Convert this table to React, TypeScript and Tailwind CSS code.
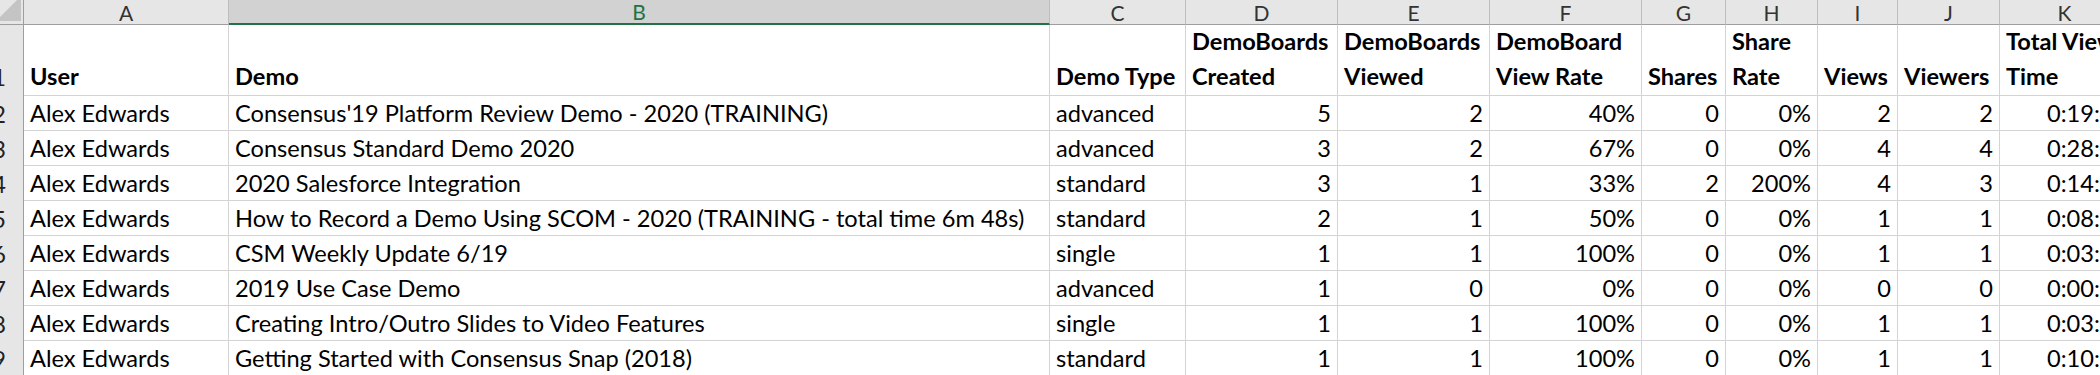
import React from "react";

type Row = {
  user: string;
  demo: string;
  type: string;
  created: number;
  viewed: number;
  viewRate: string;
  shares: number;
  shareRate: string;
  views: number;
  viewers: number;
  time: string;
};

const rows: Row[] = [
  { user: "Alex Edwards", demo: "Consensus'19 Platform Review Demo - 2020 (TRAINING)", type: "advanced", created: 5, viewed: 2, viewRate: "40%", shares: 0, shareRate: "0%", views: 2, viewers: 2, time: "0:19:42" },
  { user: "Alex Edwards", demo: "Consensus Standard Demo 2020", type: "advanced", created: 3, viewed: 2, viewRate: "67%", shares: 0, shareRate: "0%", views: 4, viewers: 4, time: "0:28:15" },
  { user: "Alex Edwards", demo: "2020 Salesforce Integration", type: "standard", created: 3, viewed: 1, viewRate: "33%", shares: 2, shareRate: "200%", views: 4, viewers: 3, time: "0:14:07" },
  { user: "Alex Edwards", demo: "How to Record a Demo Using SCOM - 2020 (TRAINING - total time 6m 48s)", type: "standard", created: 2, viewed: 1, viewRate: "50%", shares: 0, shareRate: "0%", views: 1, viewers: 1, time: "0:08:31" },
  { user: "Alex Edwards", demo: "CSM Weekly Update 6/19", type: "single", created: 1, viewed: 1, viewRate: "100%", shares: 0, shareRate: "0%", views: 1, viewers: 1, time: "0:03:26" },
  { user: "Alex Edwards", demo: "2019 Use Case Demo", type: "advanced", created: 1, viewed: 0, viewRate: "0%", shares: 0, shareRate: "0%", views: 0, viewers: 0, time: "0:00:00" },
  { user: "Alex Edwards", demo: "Creating Intro/Outro Slides to Video Features", type: "single", created: 1, viewed: 1, viewRate: "100%", shares: 0, shareRate: "0%", views: 1, viewers: 1, time: "0:03:48" },
  { user: "Alex Edwards", demo: "Getting Started with Consensus Snap (2018)", type: "standard", created: 1, viewed: 1, viewRate: "100%", shares: 0, shareRate: "0%", views: 1, viewers: 1, time: "0:10:53" },
];

const letters = ["A", "B", "C", "D", "E", "F", "G", "H", "I", "J", "K"];

// row 1 headers, one entry per line
const headers: string[][] = [
  ["User"],
  ["Demo"],
  ["Demo Type"],
  ["DemoBoards", "Created"],
  ["DemoBoards", "Viewed"],
  ["DemoBoard", "View Rate"],
  ["Shares"],
  ["Share", "Rate"],
  ["Views"],
  ["Viewers"],
  ["Total View", "Time"],
];

const cell = "border-r border-b border-[#d4d4d4] bg-white whitespace-nowrap overflow-hidden leading-[34px]";

function TextCell({ children }: { children: React.ReactNode }) {
  return <div className={`${cell} pl-[6px]`}>{children}</div>;
}

function NumCell({ children }: { children: React.ReactNode }) {
  return <div className={`${cell} pr-[6px] text-right`}>{children}</div>;
}

function RowNum({ n }: { n: number }) {
  return (
    <div className="flex items-end justify-end overflow-hidden bg-[#e6e6e6] border-r border-[#9e9e9e] pr-[17px] leading-[34px] text-[#222]">
      {n}
    </div>
  );
}

export default function App() {
  return (
    <div className="w-[2100px] h-[375px] overflow-hidden bg-white text-black font-['Lato','Liberation_Sans',sans-serif] text-[23.6px]">
      <div className="grid grid-cols-[24px_205px_821px_136px_152px_152px_152px_84px_92px_80px_102px_130px] grid-rows-[25px_71px_repeat(8,35px)]">
        {/* select-all corner */}
        <div className="bg-[#e6e6e6] border-r border-b border-[#9e9e9e] overflow-hidden">
          <svg width="24" height="24" viewBox="0 0 24 24">
            <polygon points="21,-4 21,21 -4,21" fill="#c4c4c4" />
          </svg>
        </div>

        {/* column letters */}
        {letters.map((l) =>
          l === "B" ? (
            <div
              key={l}
              className="flex items-center justify-center bg-[#d2d2d2] border-r border-[#bdbdbd] border-b-2 border-b-[#217346] text-[21px] text-[#217346] leading-none"
            >
              {l}
            </div>
          ) : (
            <div
              key={l}
              className="flex items-center justify-center bg-[#e6e6e6] border-r border-[#bdbdbd] border-b border-b-[#9e9e9e] text-[21px] text-[#333] leading-none"
            >
              {l}
            </div>
          )
        )}

        {/* row 1: headers */}
        <div className="flex items-end justify-end overflow-hidden bg-[#e6e6e6] border-r border-[#9e9e9e] pr-[17px] pb-[1px] leading-[35px] text-[#222]">
          1
        </div>
        {headers.map((lines, i) => (
          <div
            key={i}
            className="flex flex-col justify-end border-r border-b border-[#d4d4d4] pl-[6px] pb-[1px] font-bold whitespace-nowrap overflow-hidden leading-[35px]"
          >
            {lines.map((t) => (
              <span key={t}>{t}</span>
            ))}
          </div>
        ))}

        {/* data rows */}
        {rows.map((r, i) => (
          <React.Fragment key={i}>
            <RowNum n={i + 2} />
            <TextCell>{r.user}</TextCell>
            <TextCell>{r.demo}</TextCell>
            <TextCell>{r.type}</TextCell>
            <NumCell>{r.created}</NumCell>
            <NumCell>{r.viewed}</NumCell>
            <NumCell>{r.viewRate}</NumCell>
            <NumCell>{r.shares}</NumCell>
            <NumCell>{r.shareRate}</NumCell>
            <NumCell>{r.views}</NumCell>
            <NumCell>{r.viewers}</NumCell>
            <div className={`${cell} pl-[47px]`}>{r.time}</div>
          </React.Fragment>
        ))}
      </div>
    </div>
  );
}
